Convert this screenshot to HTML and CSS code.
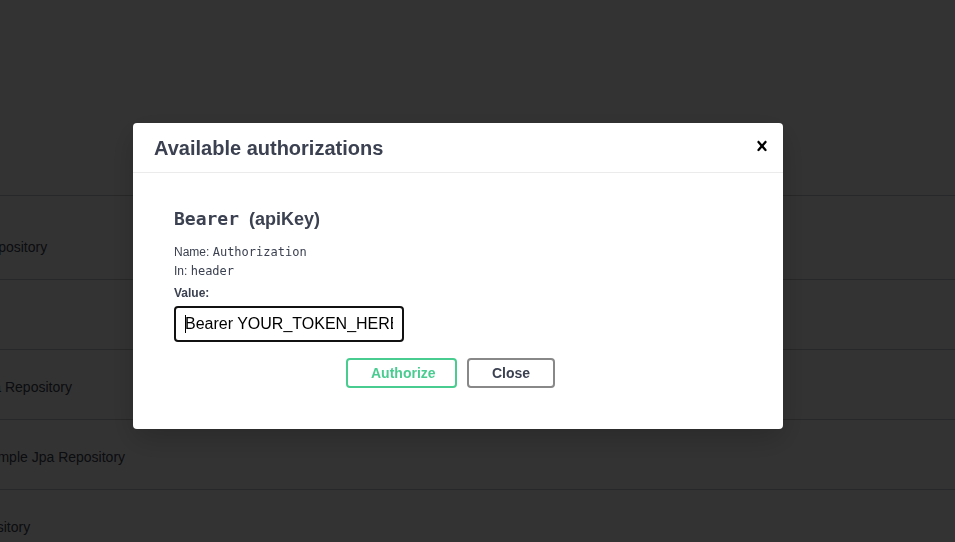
FILE: index.html
```html
<!DOCTYPE html>
<html>
<head>
<meta charset="utf-8">
<link rel="stylesheet" href="styles.css">
</head>
<body>
<div class="page">
  <div class="tag tag-top"></div>
  <div class="tag tag-first"><span class="desc d1">Crud Repository</span></div>
  <div class="tag"></div>
  <div class="tag"><span class="desc d3">Jpa Repository</span></div>
  <div class="tag"><span class="desc d4">Simple Jpa Repository</span></div>
  <div class="tag"><span class="desc d5">Crud Repository</span></div>
</div>
<div class="backdrop">
  <div class="modal">
    <div class="modal-header">
      <h3 class="modal-title">Available authorizations</h3>
      <button class="close-btn" aria-label="Close">
        <svg width="20" height="20" viewBox="0 0 20 20"><path d="M14.348 14.849c-.469.469-1.229.469-1.697 0L10 11.819l-2.651 3.029c-.469.469-1.229.469-1.697 0-.469-.469-.469-1.229 0-1.697l2.758-3.15-2.759-3.152c-.469-.469-.469-1.228 0-1.697.469-.469 1.228-.469 1.697 0L10 8.183l2.651-3.031c.469-.469 1.228-.469 1.697 0 .469.469.469 1.229 0 1.697l-2.758 3.152 2.758 3.15c.469.469.469 1.229 0 1.698z" fill="#000"/></svg>
      </button>
    </div>
    <div class="modal-content">
      <h4 class="auth-title"><code>Bearer</code>&nbsp; (apiKey)</h4>
      <p class="meta">Name: <code>Authorization</code></p>
      <p class="meta">In: <code>header</code></p>
      <p class="meta label">Value:</p>
      <div class="input"><div class="input-text"><span class="caret"></span>Bearer YOUR_TOKEN_HERE</div></div>
      <div class="btn-wrapper">
        <button class="btn authorize">Authorize</button>
        <button class="btn close">Close</button>
      </div>
    </div>
  </div>
</div>
</body>
</html>
```
FILE: styles.css
```css
html, body {
  margin: 0;
  padding: 0;
  background: #fff;
  overflow: hidden;
  width: 955px;
  height: 542px;
  font-family: "Liberation Sans", Arial, sans-serif;
}

.page {
  display: flex;
  flex-direction: column;
}

.tag {
  flex: none;
  height: 70px;
  box-sizing: border-box;
  border-bottom: 1px solid rgba(59, 65, 81, 0.3);
  display: flex;
  align-items: flex-end;
  padding-bottom: 22px;
  overflow: hidden;
  white-space: nowrap;
}

.tag-top {
  height: 196px;
}

.tag-first {
  height: 84px;
}

.desc {
  font-size: 14px;
  line-height: 20px;
  color: #3b4151;
}

.d1 { margin-left: -54px; }
.d3 { margin-left: -21.5px; }
.d4 { margin-left: -15px; }
.d5 { margin-left: -71px; }

.backdrop {
  position: fixed;
  inset: 0;
  background: rgba(0, 0, 0, 0.8);
}

.modal {
  position: absolute;
  left: 133px;
  top: 123px;
  width: 650px;
  height: 306px;
  background: #fff;
  border-radius: 4px;
  box-shadow: 0 10px 30px 0 rgba(0, 0, 0, 0.2);
  color: #3b4151;
}

.modal-header {
  height: 50px;
  box-sizing: border-box;
  border-bottom: 1px solid #ebebeb;
  display: flex;
  align-items: center;
  justify-content: space-between;
  padding: 0 11px 0 21px;
}

.modal-title {
  margin: 0;
  font-size: 20px;
  font-weight: 700;
  color: #3b4151;
  line-height: 24px;
  padding-top: 1px;
}

.close-btn {
  border: 0;
  background: none;
  padding: 0;
  width: 20px;
  height: 20px;
  display: flex;
  margin-top: -3px;
}

.modal-content {
  padding: 34px 41px 0;
}

.auth-title {
  margin: 0 0 12px;
  font-size: 18px;
  font-weight: 700;
  line-height: 24px;
  color: #3b4151;
}

.auth-title code {
  font-family: "DejaVu Sans Mono", monospace;
  font-weight: 700;
  font-size: 18px;
}

.meta {
  margin: 0;
  font-size: 12px;
  line-height: 19px;
  color: #3b4151;
}

.meta code {
  font-family: "DejaVu Sans Mono", monospace;
  font-size: 12px;
}

.label {
  font-weight: 700;
  margin-top: 3px;
}

.input {
  margin-top: 3px;
  width: 230px;
  height: 36px;
  box-sizing: border-box;
  border: 2px solid #111;
  border-radius: 4px;
  padding: 0 9px 0 9px;
  display: flex;
  align-items: center;
}

.input-text {
  flex: 1;
  min-width: 0;
  font-size: 16px;
  line-height: 20px;
  color: #000;
  white-space: nowrap;
  overflow: hidden;
  display: flex;
  align-items: center;
}

.caret {
  flex: none;
  width: 1px;
  height: 18px;
  background: #000;
  margin-right: -1px;
}

.btn-wrapper {
  display: flex;
  gap: 10px;
  margin-top: 16px;
  padding-left: 172px;
}

.btn {
  height: 30px;
  box-sizing: border-box;
  padding: 0 23px;
  font-family: "Liberation Sans", Arial, sans-serif;
  font-size: 14px;
  font-weight: 700;
  border-radius: 4px;
  background: transparent;
}

.authorize {
  width: 111px;
  border: 2px solid #49cc90;
  color: #49cc90;
}

.close {
  width: 88px;
  border: 2px solid #888;
  color: #3b4151;
}
```
